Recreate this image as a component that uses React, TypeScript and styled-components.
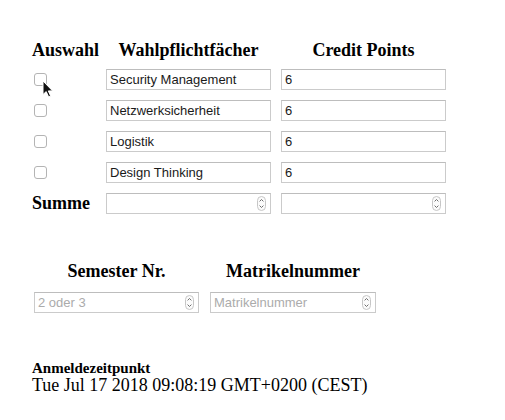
import React from "react";
import styled, { createGlobalStyle } from "styled-components";

const GlobalStyle = createGlobalStyle`
    body {
        margin: 0;
        background: #ffffff;
        font-family: "Liberation Serif", "Times New Roman", serif;
        color: #000000;
    }
`;

const Page = styled.div`
    width: 505px;
    height: 420px;
    box-sizing: border-box;
    padding: 41px 0 0 32px;
    position: relative;
    overflow: hidden;
`;

const SubjectGrid = styled.div`
    display: grid;
    grid-template-columns: 64px 165px 165px;
    grid-template-rows: 18px repeat(5, 21px);
    column-gap: 10px;
    row-gap: 10px;
`;

const HeaderCell = styled.div<{ $align?: string }>`
    font-weight: bold;
    font-size: 18px;
    line-height: 18px;
    white-space: nowrap;
    text-align: ${(props) => props.$align || "center"};
`;

const CheckCell = styled.div`
    display: flex;
    align-items: center;
    padding-left: 2px;
    position: relative;
`;

const Check = styled.input`
    appearance: none;
    margin: 0;
    width: 13px;
    height: 13px;
    border: 1px solid #b4b4b4;
    border-radius: 3px;
    background: #ffffff;
    box-sizing: border-box;
`;

const TextField = styled.input`
    box-sizing: border-box;
    width: 100%;
    height: 21px;
    margin: 0;
    padding: 0 3px;
    border: 1px solid #cbcbcb;
    border-top-color: #bdbdbd;
    background: #ffffff;
    font-family: "Liberation Sans", Arial, sans-serif;
    font-size: 13px;
    color: #1a1a1a;
    outline: none;

    &::placeholder {
        color: #ababab;
    }
`;

const SumLabel = styled.div`
    display: flex;
    align-items: center;
    font-weight: bold;
    font-size: 18px;
`;

const NumberWrap = styled.div`
    position: relative;
`;

const SpinnerBox = styled.div`
    position: absolute;
    right: 5px;
    top: 3px;
    display: flex;
`;

const PersonGrid = styled.div`
    display: grid;
    grid-template-columns: 165px 166px;
    grid-template-rows: 18px 21px;
    column-gap: 11px;
    row-gap: 12px;
    margin: 48px 0 0 2px;
`;

const Stamp = styled.div`
    margin-top: 47px;
    font-size: 18px;
    line-height: 18px;
`;

const StampLabel = styled.div`
    font-weight: bold;
    font-size: 15px;
    line-height: 16px;
`;

const CursorBox = styled.div`
    position: absolute;
    left: 10px;
    top: 11px;
    display: flex;
`;

const Spinner = () => (
    <SpinnerBox>
        <svg width="9" height="15" viewBox="0 0 9 15">
            <rect x="0.5" y="0.5" width="8" height="14" rx="4" fill="#fbfbfb" stroke="#c6c6c6" />
            <path d="M2.6 5.4 L4.5 3.5 L6.4 5.4" fill="none" stroke="#6d6d6d" strokeWidth="1" />
            <path d="M2.6 9.6 L4.5 11.5 L6.4 9.6" fill="none" stroke="#6d6d6d" strokeWidth="1" />
        </svg>
    </SpinnerBox>
);

const NumberField = ({ placeholder }: { placeholder?: string }) => (
    <NumberWrap>
        <TextField type="text" placeholder={placeholder} readOnly />
        <Spinner />
    </NumberWrap>
);

const Cursor = () => (
    <CursorBox>
        <svg width="12" height="18" viewBox="0 0 12 18">
            <path
                d="M1 1 L1 14.5 L4.2 11.6 L6.6 16.8 L8.6 15.9 L6.3 10.9 L10.6 10.9 Z"
                fill="#111111"
                stroke="#ffffff"
                strokeWidth="1"
                strokeLinejoin="round"
            />
        </svg>
    </CursorBox>
);

const subjects = [
    { name: "Security Management", points: "6" },
    { name: "Netzwerksicherheit", points: "6" },
    { name: "Logistik", points: "6" },
    { name: "Design Thinking", points: "6" },
];

const App: React.FC = () => {
    return (
        <Page>
            <GlobalStyle />
            <SubjectGrid>
                <HeaderCell $align="left">Auswahl</HeaderCell>
                <HeaderCell>Wahlpflichtfächer</HeaderCell>
                <HeaderCell>Credit Points</HeaderCell>

                {subjects.map((s, i) => (
                    <React.Fragment key={s.name}>
                        <CheckCell>
                            <Check type="checkbox" />
                            {i === 0 && <Cursor />}
                        </CheckCell>
                        <TextField type="text" defaultValue={s.name} />
                        <TextField type="text" defaultValue={s.points} />
                    </React.Fragment>
                ))}

                <SumLabel>Summe</SumLabel>
                <NumberField />
                <NumberField />
            </SubjectGrid>

            <PersonGrid>
                <HeaderCell>Semester Nr.</HeaderCell>
                <HeaderCell>Matrikelnummer</HeaderCell>
                <NumberField placeholder="2 oder 3" />
                <NumberField placeholder="Matrikelnummer" />
            </PersonGrid>

            <Stamp>
                <StampLabel>Anmeldezeitpunkt</StampLabel>
                <div>Tue Jul 17 2018 09:08:19 GMT+0200 (CEST)</div>
            </Stamp>
        </Page>
    );
};

export default App;
